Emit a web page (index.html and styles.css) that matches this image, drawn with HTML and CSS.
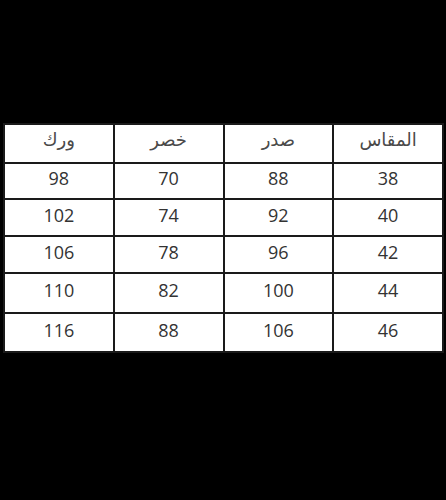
FILE: index.html
```html
<!DOCTYPE html>
<html lang="ar">
<head>
<meta charset="utf-8">
<link rel="stylesheet" href="styles.css">
</head>
<body>
<div class="page">
  <table class="sizes" dir="rtl">
    <thead>
      <tr class="r-h"><th>المقاس</th><th>صدر</th><th>خصر</th><th>ورك</th></tr>
    </thead>
    <tbody>
      <tr class="r1"><td>38</td><td>88</td><td>70</td><td>98</td></tr>
      <tr class="r2"><td>40</td><td>92</td><td>74</td><td>102</td></tr>
      <tr class="r3"><td>42</td><td>96</td><td>78</td><td>106</td></tr>
      <tr class="r4"><td>44</td><td>100</td><td>82</td><td>110</td></tr>
      <tr class="r5"><td>46</td><td>106</td><td>88</td><td>116</td></tr>
    </tbody>
  </table>
</div>
</body>
</html>
```
FILE: styles.css
```css
html, body {
  margin: 0;
  padding: 0;
  background: #000;
  height: 500px;
}
.page {
  padding: 123px 3px 0 3px;
}
.sizes {
  width: 441px;
  border-collapse: collapse;
  background: #fff;
  table-layout: fixed;
}
.sizes th, .sizes td {
  border: 2px solid #1a1a1a;
  text-align: center;
}
.sizes th {
  font-family: "DejaVu Sans", sans-serif;
  font-weight: normal;
  font-size: 18px;
  color: #4a4a4a;
  height: 29px;
  padding: 0 0 8px 0;
}
.sizes td {
  font-family: "Open Sans", "Liberation Sans", sans-serif;
  font-size: 18px;
  color: #333;
  padding: 0 0 6px 0;
}
.r1 td { height: 28px; }
.r2 td { height: 29px; }
.r3 td { height: 29px; }
.r4 td { height: 32px; }
.r5 td { height: 31px; }
```
